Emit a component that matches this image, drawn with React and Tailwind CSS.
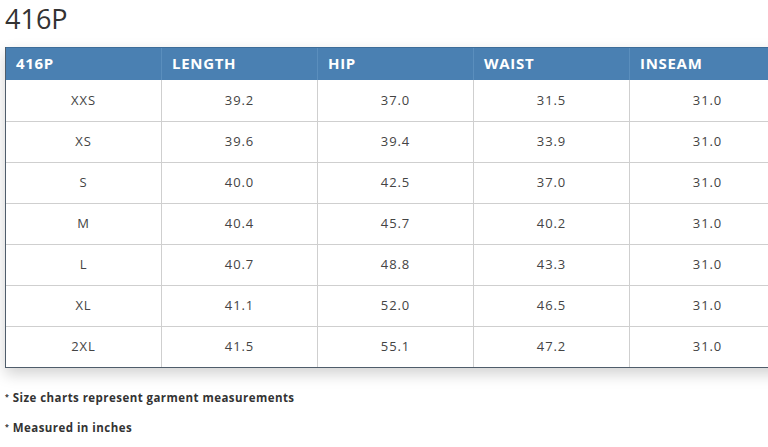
import React from "react";

const rows = [
  ["XXS", "39.2", "37.0", "31.5", "31.0"],
  ["XS", "39.6", "39.4", "33.9", "31.0"],
  ["S", "40.0", "42.5", "37.0", "31.0"],
  ["M", "40.4", "45.7", "40.2", "31.0"],
  ["L", "40.7", "48.8", "43.3", "31.0"],
  ["XL", "41.1", "52.0", "46.5", "31.0"],
  ["2XL", "41.5", "55.1", "47.2", "31.0"],
];

const heads = ["416P", "LENGTH", "HIP", "WAIST", "INSEAM"];

export default function App() {
  return (
    <div className="w-[768px] h-[447px] overflow-hidden bg-white" style={{ fontFamily: "'Open Sans', sans-serif" }}>
      <h1 className="pl-[5px] pt-[1px] mb-[10px] text-[27px] leading-[36px] text-[#333] font-normal">416P</h1>

      {/* Size table */}
      <div className="ml-[5px] w-[785px] border border-[#4f5d6b] border-t-0 shadow-[0_6px_14px_rgba(0,0,0,0.18)]">
        <div className="flex bg-[#4a80b2] h-[33px] border-t border-[#3d6d99]">
          {heads.map((h, i) => (
            <div
              key={h}
              className={`flex items-center pl-[10px] pb-[2px] text-white font-bold text-[15px] tracking-[0.7px] ${i > 0 ? "w-[156px] border-l border-[#5a8ebd]" : "w-[155px]"}`}
            >
              {h}
            </div>
          ))}
        </div>
        {rows.map((r, ri) => (
          <div key={ri} className={`flex h-[41px] ${ri > 0 ? "border-t border-[#cfcfcf]" : ""}`}>
            {r.map((c, ci) => (
              <div
                key={ci}
                className={`flex items-center justify-center text-[13px] text-[#444] tracking-[0.9px] ${ci > 0 ? "w-[156px] border-l border-[#cfcfcf]" : "w-[155px]"}`}
              >
                {c}
              </div>
            ))}
          </div>
        ))}
      </div>

      <div className="pl-[5px] pt-[23px] text-[11.5px] font-bold text-[#333] leading-[14px] tracking-[0.45px]">
        <p><sup className="text-[7px]">*</sup> Size charts represent garment measurements</p>
        <p className="mt-[16px]"><sup className="text-[7px]">*</sup> Measured in inches</p>
      </div>
    </div>
  );
}
